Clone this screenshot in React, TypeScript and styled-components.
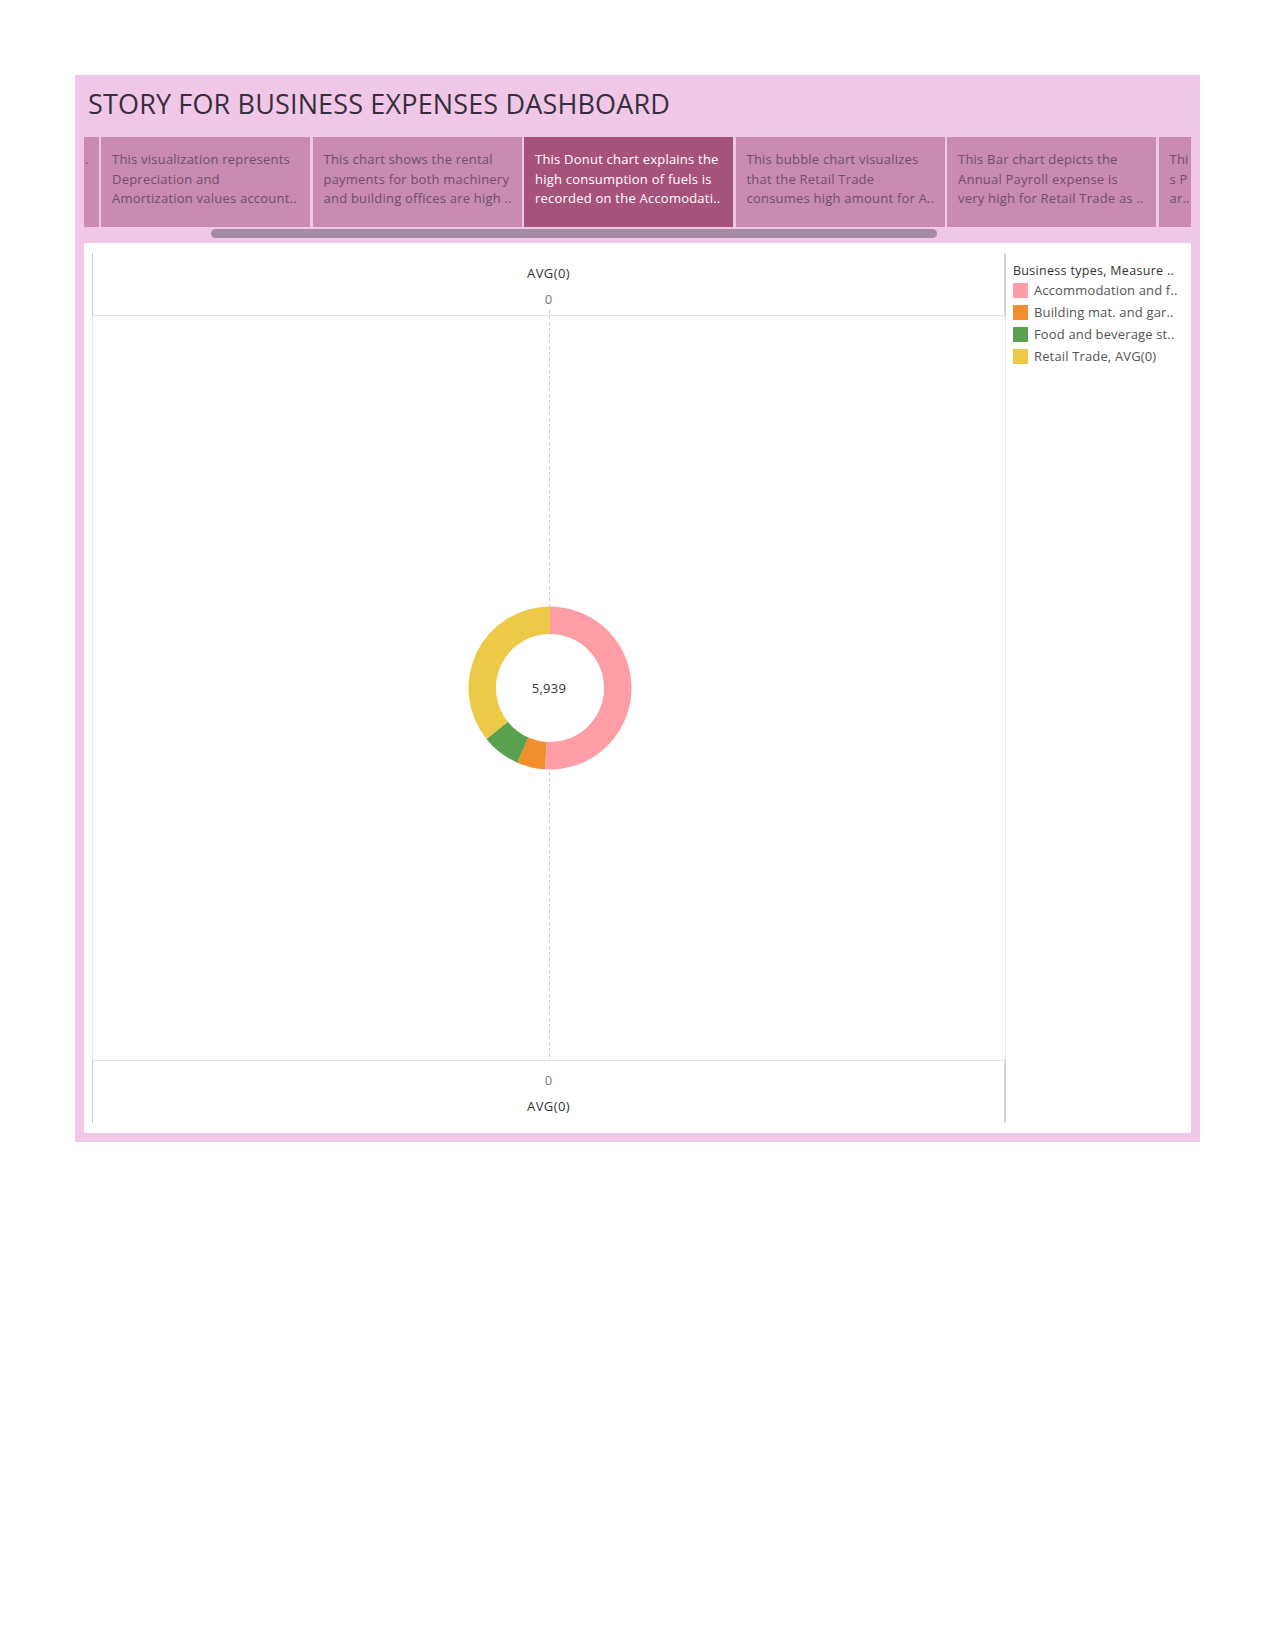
import React from "react";
import styled, { createGlobalStyle } from "styled-components";

const GlobalStyle = createGlobalStyle`
  html, body {
    margin: 0;
    padding: 0;
    background: #ffffff;
  }
  body {
    font-family: "Open Sans", "Noto Sans", "DejaVu Sans", sans-serif;
  }
  * { box-sizing: border-box; }
`;

const Dashboard = styled.div`
  margin: 75px 0 0 75px;
  width: 1125px;
  height: 1067px;
  background: #f0c7e7;
  padding: 0 9px 9px 9px;
  display: flex;
  flex-direction: column;
`;

const Title = styled.h1`
  margin: 0;
  height: 62px;
  padding: 11px 0 0 4px;
  font-family: "Open Sans", "Noto Sans", sans-serif;
  font-weight: 400;
  font-size: 27px;
  line-height: 36px;
  color: #35303a;
  letter-spacing: 0.15px;
  white-space: nowrap;
`;

const TabStrip = styled.div`
  height: 90px;
  display: flex;
  gap: 2.5px;
  overflow: hidden;
`;

const Tab = styled.div<{ $active?: boolean; $kind?: "stub" | "narrow" | "full" }>`
  flex: ${(p) => (p.$kind === "narrow" ? "1 1 0" : "0 0 auto")};
  width: ${(p) => (p.$kind === "stub" ? "14.5px" : p.$kind === "narrow" ? "auto" : "209px")};
  min-width: 0;
  height: 90px;
  overflow: hidden;
  background: ${(p) => (p.$active ? "#a7527b" : "#c98bb1")};
  color: ${(p) => (p.$active ? "#ffffff" : "#6e5068")};
  padding: ${(p) => (p.$kind === "stub" ? "13px 0 0 1px" : "13px 0 0 11px")};
  font-family: "Open Sans", "Noto Sans", sans-serif;
  font-size: 13px;
  line-height: 19.5px;
  letter-spacing: 0.22px;
`;

const TabLine = styled.div`
  white-space: nowrap;
`;

const ScrollTrack = styled.div`
  height: 16px;
  padding-top: 2px;
`;

const ScrollThumb = styled.div`
  margin-left: 127px;
  width: 726px;
  height: 9px;
  border-radius: 5px;
  background: #a68aa1;
`;

const Panel = styled.div`
  height: 890px;
  background: #ffffff;
  display: flex;
  padding: 10px 0 10px 8px;
`;

const ChartFrame = styled.div`
  width: 914px;
  flex: 0 0 914px;
  display: flex;
  flex-direction: column;
`;

const AxisHeader = styled.div<{ $bottom?: boolean }>`
  height: 63px;
  display: flex;
  flex-direction: ${(p) => (p.$bottom ? "column-reverse" : "column")};
  align-items: center;
  justify-content: flex-start;
  padding: ${(p) => (p.$bottom ? "0 0 9px 0" : "12px 0 0 0")};
  gap: 10px;
  border-left: 1px solid #cfcfcf;
  border-right: 2px solid #d6d6d6;
  ${(p) => (p.$bottom ? "border-top: 1px solid #e2e2e2;" : "border-bottom: 1px solid #e2e2e2;")}
  background: ${(p) =>
    p.$bottom
      ? "none"
      : "repeating-linear-gradient(to bottom, #cccccc 0 3px, transparent 3px 5px) 456px 57px / 1px 6px no-repeat"};
`;

const AxisTitle = styled.div`
  font-size: 13px;
  line-height: 16px;
  color: #333333;
  letter-spacing: 0.4px;
`;

const AxisTick = styled.div`
  font-size: 13px;
  line-height: 16px;
  color: #7a7a7a;
  font-weight: 400;
`;

const Plot = styled.div`
  flex: 1;
  display: flex;
  align-items: center;
  justify-content: center;
  border-left: 1px solid #eeeeee;
  border-right: 1px solid #e6e6e6;
  padding-left: 1px;
  background: repeating-linear-gradient(to bottom, #c9c9c9 0 3px, transparent 3px 6px) center top / 1px 100%
    no-repeat;
`;

const Legend = styled.div`
  flex: 1;
  padding: 10px 4px 0 7px;
  display: flex;
  flex-direction: column;
  min-width: 0;
`;

const LegendTitle = styled.div`
  font-size: 12.5px;
  line-height: 16px;
  color: #333333;
  white-space: nowrap;
  overflow: hidden;
  letter-spacing: 0.3px;
  margin-bottom: 3px;
`;

const LegendRow = styled.div`
  display: flex;
  align-items: center;
  height: 22px;
  gap: 6px;
`;

const Swatch = styled.span<{ $color: string }>`
  flex: 0 0 15px;
  width: 15px;
  height: 15px;
  background: ${(p) => p.$color};
  margin-top: -6px;
`;

const LegendLabel = styled.span`
  font-size: 13px;
  line-height: 16px;
  color: #555555;
  white-space: nowrap;
  letter-spacing: 0.15px;
  margin-top: -6px;
`;

const DonutSvg = styled.svg`
  display: block;
  overflow: visible;
`;

const tabs: { lines: string[]; active?: boolean; kind?: "stub" | "narrow" | "full" }[] = [
  { lines: ["."], kind: "stub" },
  { lines: ["This visualization represents", "Depreciation and", "Amortization values account.."] },
  { lines: ["This chart shows the rental", "payments for both machinery", "and building offices are high .."] },
  {
    lines: ["This Donut chart explains the", "high consumption of fuels is", "recorded on the Accomodati.."],
    active: true,
  },
  { lines: ["This bubble chart visualizes", "that the Retail Trade", "consumes high amount for A.."] },
  { lines: ["This Bar chart depicts the", "Annual Payroll expense is", "very high for Retail Trade as .."] },
  { lines: ["Thi", "s P", "ar.."], kind: "narrow" },
];

const segments = [
  { label: "Accommodation and f..", color: "#ff9da7", value: 183.5 },
  { label: "Building mat. and gar..", color: "#f28e2b", value: 20.2 },
  { label: "Food and beverage st..", color: "#59a14f", value: 27.6 },
  { label: "Retail Trade, AVG(0)", color: "#edc948", value: 128.7 },
];

function polar(cx: number, cy: number, r: number, deg: number) {
  const a = ((deg - 90) * Math.PI) / 180;
  return [cx + r * Math.cos(a), cy + r * Math.sin(a)];
}

function arcPath(cx: number, cy: number, ro: number, ri: number, a0: number, a1: number) {
  const [x0, y0] = polar(cx, cy, ro, a0);
  const [x1, y1] = polar(cx, cy, ro, a1);
  const [x2, y2] = polar(cx, cy, ri, a1);
  const [x3, y3] = polar(cx, cy, ri, a0);
  const large = a1 - a0 > 180 ? 1 : 0;
  return `M${x0},${y0} A${ro},${ro} 0 ${large} 1 ${x1},${y1} L${x2},${y2} A${ri},${ri} 0 ${large} 0 ${x3},${y3} Z`;
}

function Donut() {
  const total = segments.reduce((s, x) => s + x.value, 0);
  let acc = 0;
  const size = 164;
  const c = size / 2;
  return (
    <DonutSvg width={size} height={size} viewBox={`0 0 ${size} ${size}`}>
      <circle cx={c} cy={c} r={54} fill="#ffffff" />
      {segments.map((s) => {
        const a0 = (acc / total) * 360;
        acc += s.value;
        const a1 = (acc / total) * 360;
        return <path key={s.label} d={arcPath(c, c, 81.5, 54, a0, a1)} fill={s.color} />;
      })}
      <text
        x={c - 1}
        y={c + 4.5}
        textAnchor="middle"
        fontFamily='"Open Sans", "Noto Sans", sans-serif'
        fontSize="13"
        letterSpacing="0.3"
        fill="#333333"
      >
        5,939
      </text>
    </DonutSvg>
  );
}

export default function App() {
  return (
    <>
      <GlobalStyle />
      <Dashboard>
        <Title>STORY FOR BUSINESS EXPENSES DASHBOARD</Title>
        <TabStrip>
          {tabs.map((t, i) => (
            <Tab key={i} $active={t.active} $kind={t.kind ?? "full"}>
              {t.lines.map((l, j) => (
                <TabLine key={j}>{l}</TabLine>
              ))}
            </Tab>
          ))}
        </TabStrip>
        <ScrollTrack>
          <ScrollThumb />
        </ScrollTrack>
        <Panel>
          <ChartFrame>
            <AxisHeader>
              <AxisTitle>AVG(0)</AxisTitle>
              <AxisTick>0</AxisTick>
            </AxisHeader>
            <Plot>
              <Donut />
            </Plot>
            <AxisHeader $bottom>
              <AxisTitle>AVG(0)</AxisTitle>
              <AxisTick>0</AxisTick>
            </AxisHeader>
          </ChartFrame>
          <Legend>
            <LegendTitle>Business types, Measure ..</LegendTitle>
            {segments.map((s) => (
              <LegendRow key={s.label}>
                <Swatch $color={s.color} />
                <LegendLabel>{s.label}</LegendLabel>
              </LegendRow>
            ))}
          </Legend>
        </Panel>
      </Dashboard>
    </>
  );
}
